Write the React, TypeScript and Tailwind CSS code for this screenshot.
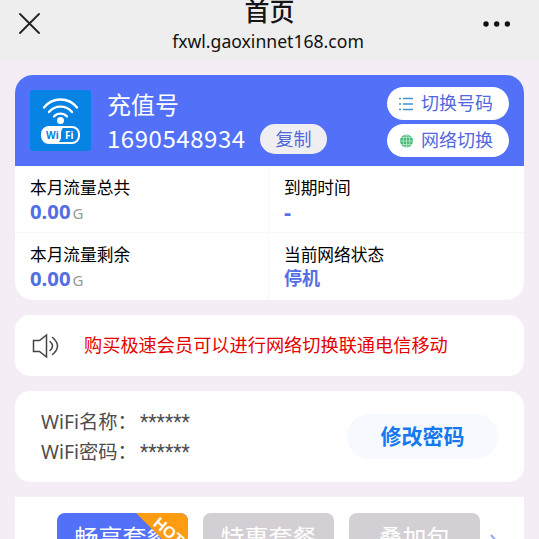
import { ReactNode } from "react";

interface StatProps {
  label: string;
  children: ReactNode;
  className?: string;
}

const plans = [
  { name: "畅享套餐", active: true, hot: true },
  { name: "特惠套餐", active: false, hot: false },
  { name: "叠加包", active: false, hot: false },
];

export default function App() {
  return (
    <div className="h-[539px] w-[539px] overflow-hidden bg-[#f4edf6] font-['Noto_Sans','Noto_Sans_CJK_SC',sans-serif] text-black">
      <Header />
      <main className="px-[15px] pt-3.5">
        <section className="h-[225px] overflow-hidden rounded-[18px] bg-white">
          <div className="flex h-[91px] bg-[#5271f8] px-[15px]">
            <WifiLogo />
            <div className="ml-4 mt-3 flex-1 text-2xl text-white">
              <div className="h-[34px] pt-px leading-[34px]">充值号</div>
              <div className="flex h-[36px] items-center">
                <span className="w-[153px] pb-[3px] font-['Noto_Sans_CJK_SC',sans-serif] leading-[33px] tracking-[0.55px]">1690548934</span>
                <button className="h-[30px] w-[67px] rounded-full bg-[#efeff2] text-lg leading-[30px] text-[#5068dc]">复制</button>
              </div>
            </div>
            <div className="mt-3 flex flex-col gap-1">
              <PillButton icon={<ListIcon />}>切换号码</PillButton>
              <PillButton icon={<GlobeIcon />}>网络切换</PillButton>
            </div>
          </div>
          <div className="grid grid-cols-[254px_255px] grid-rows-[67px_67px]">
            <Stat label="本月流量总共" className="border-b border-r">
              <DataAmount value="0.00" />
            </Stat>
            <Stat label="到期时间" className="border-b">
              <span className="block h-[3px] pt-0 text-[22px]">-</span>
            </Stat>
            <Stat label="本月流量剩余" className="border-r">
              <DataAmount value="0.00" />
            </Stat>
            <Stat label="当前网络状态">停机</Stat>
          </div>
        </section>

        <section className="mt-[15px] flex h-[61px] items-center rounded-[15px] bg-white pl-[17px]">
          <SpeakerIcon />
          <p className="ml-[23px] whitespace-nowrap text-[18.2px] text-[#e60000]">购买极速会员可以进行网络切换联通电信移动</p>
        </section>

        <section className="mt-[15px] flex h-[91px] items-center justify-between rounded-[15px] bg-white px-[26px]">
          <div className="text-[19.3px] leading-[30px] text-[#4d4d4d]">
            <WifiRow label="WiFi名称：" />
            <WifiRow label="WiFi密码：" />
          </div>
          <button className="h-[45px] w-[151px] rounded-full bg-[#f6faff] text-[21px] font-bold text-[#1678ef]">修改密码</button>
        </section>

        <section className="mt-[15px] flex h-[60px] bg-white pl-[42px] pt-4">
          <div className="flex gap-[15px]">
            {plans.map((plan) => (
              <div
                key={plan.name}
                className={`relative h-12 w-[131px] overflow-hidden whitespace-nowrap rounded-lg text-center text-2xl leading-[49px] text-white ${
                  plan.active ? "bg-[#5271f8]" : "bg-[#d4cfd4]"
                }`}
              >
                {plan.name}
                {plan.hot && <HotBadge />}
              </div>
            ))}
          </div>
          <svg width="9" height="16" viewBox="0 0 9 16" fill="none" className="ml-[10px] mt-[21px]">
            <path d="M1 1l6 7-6 7" stroke="#96a5ed" strokeWidth="2" />
          </svg>
        </section>
      </main>
    </div>
  );
}

function Header() {
  return (
    <header className="grid h-[61px] grid-cols-[60px_1fr_60px] bg-[#eeeeee]">
      <svg width="21" height="21" viewBox="0 0 21 21" className="ml-[19px] mt-[13px]">
        <path d="M1 1l19 19M20 1L1 20" stroke="#222" strokeWidth="1.8" strokeLinecap="round" />
      </svg>
      <div className="-mt-2 text-center">
        <h1 className="h-[37px] text-[25px] font-medium leading-[38px] text-[#151515]">首页</h1>
        <div className="h-6 pr-[3px] text-[17.6px] leading-6 text-[#111]">fxwl.gaoxinnet168.com</div>
      </div>
      <svg width="28" height="6" viewBox="0 0 28 6" className="ml-1 mt-[21px]" fill="#111">
        <circle cx="3" cy="3" r="2.7" />
        <circle cx="13.7" cy="3" r="2.7" />
        <circle cx="24.4" cy="3" r="2.7" />
      </svg>
    </header>
  );
}

function PillButton({ icon, children }: { icon: ReactNode; children: ReactNode }) {
  return (
    <button className="flex h-[33px] w-[122px] items-center gap-[7px] rounded-full bg-white pl-3 text-[18px] leading-[33px] text-[#5269dd]">
      {icon}
      <span>{children}</span>
    </button>
  );
}

function Stat({ label, children, className = "" }: StatProps) {
  return (
    <div className={`border-[#f7f7f8] pl-[15px] pt-2.5 ${className}`}>
      <div className="h-6 text-[16.7px] leading-6">{label}</div>
      <div className="h-[23px] text-[18px] font-bold leading-[23px] text-[#546ee3]">{children}</div>
    </div>
  );
}

function DataAmount({ value }: { value: string }) {
  return (
    <div className="flex items-baseline">
      <span className="text-[20.3px]">{value}</span>
      <span className="ml-0.5 text-[15px] font-normal text-[#999]">G</span>
    </div>
  );
}

function WifiRow({ label }: { label: string }) {
  return (
    <div className="flex h-[30px]">
      <span className="w-[99px] whitespace-nowrap">{label}</span>
      <span className="pt-px font-['Roboto',sans-serif] text-[19.3px] leading-[30px]">******</span>
    </div>
  );
}

function HotBadge() {
  return (
    <svg width="52" height="52" viewBox="0 0 52 52" className="absolute right-0 top-0">
      <path d="M0 0h52v52z" fill="#ff9c12" />
      <text x="33" y="24" transform="rotate(40 33 18)" textAnchor="middle" fill="#fff" fontSize="16" fontWeight="700" fontFamily="Liberation Sans, sans-serif">
        HOT
      </text>
    </svg>
  );
}

function WifiLogo() {
  return (
    <svg width="61" height="61" viewBox="0 0 61 61" className="mt-[15px]">
      <rect width="61" height="61" rx="3" fill="#0783e4" />
      <g fill="none" stroke="#fff" strokeWidth="2.3" strokeLinecap="round">
        <path d="M14 17.5a21 21 0 0133 0" />
        <path d="M19 22a15 15 0 0123 0" />
        <path d="M24 26.5a9 9 0 0113 0" />
      </g>
      <circle cx="30.5" cy="30.5" r="3.5" fill="#fff" />
      <rect x="12" y="37" width="37" height="16" rx="7" fill="none" stroke="#fff" strokeWidth="2" />
      <path d="M19 37h15q-3 2-3 7v3q0 4-4 6h-8q-7 0-7-7v-2q0-7 7-7" fill="#fff" />
      <g fontFamily="Noto Sans, sans-serif" fontSize="10" fontWeight="700">
        <text x="16" y="48.5" fill="#0783e4">Wi</text>
        <text x="35" y="48.5" fill="#fff">Fi</text>
      </g>
    </svg>
  );
}

function ListIcon() {
  return (
    <svg width="15" height="14" viewBox="0 0 15 14" stroke="#4195cd" strokeWidth="1.3">
      <path d="M0 1.5h2M4 1.5h10M0 7h2M4 7h10M0 12.5h2M4 12.5h10" />
    </svg>
  );
}

function GlobeIcon() {
  return (
    <svg width="15" height="14" viewBox="0 0 15 14" fill="none">
      <circle cx="7.5" cy="7" r="6.5" fill="#49bd78" />
      <path d="M7.5.5v13M1 7h13M2.2 3.5h10.6M2.2 10.5h10.6" stroke="#d8f3e2" strokeWidth=".6" />
      <ellipse cx="7.5" cy="7" rx="3.3" ry="6.3" stroke="#d8f3e2" strokeWidth=".6" />
    </svg>
  );
}

function SpeakerIcon() {
  return (
    <svg width="29" height="26" viewBox="0 0 29 26" fill="none" stroke="#444" strokeWidth="1.5" strokeLinecap="round">
      <path d="M1.5 7.5h6L14.5 2v22l-7-5.5h-6z" />
      <path d="M18 8.5q5 4.5 0 9M20.5 4.500q10 8.500 0 17" />
    </svg>
  );
}
